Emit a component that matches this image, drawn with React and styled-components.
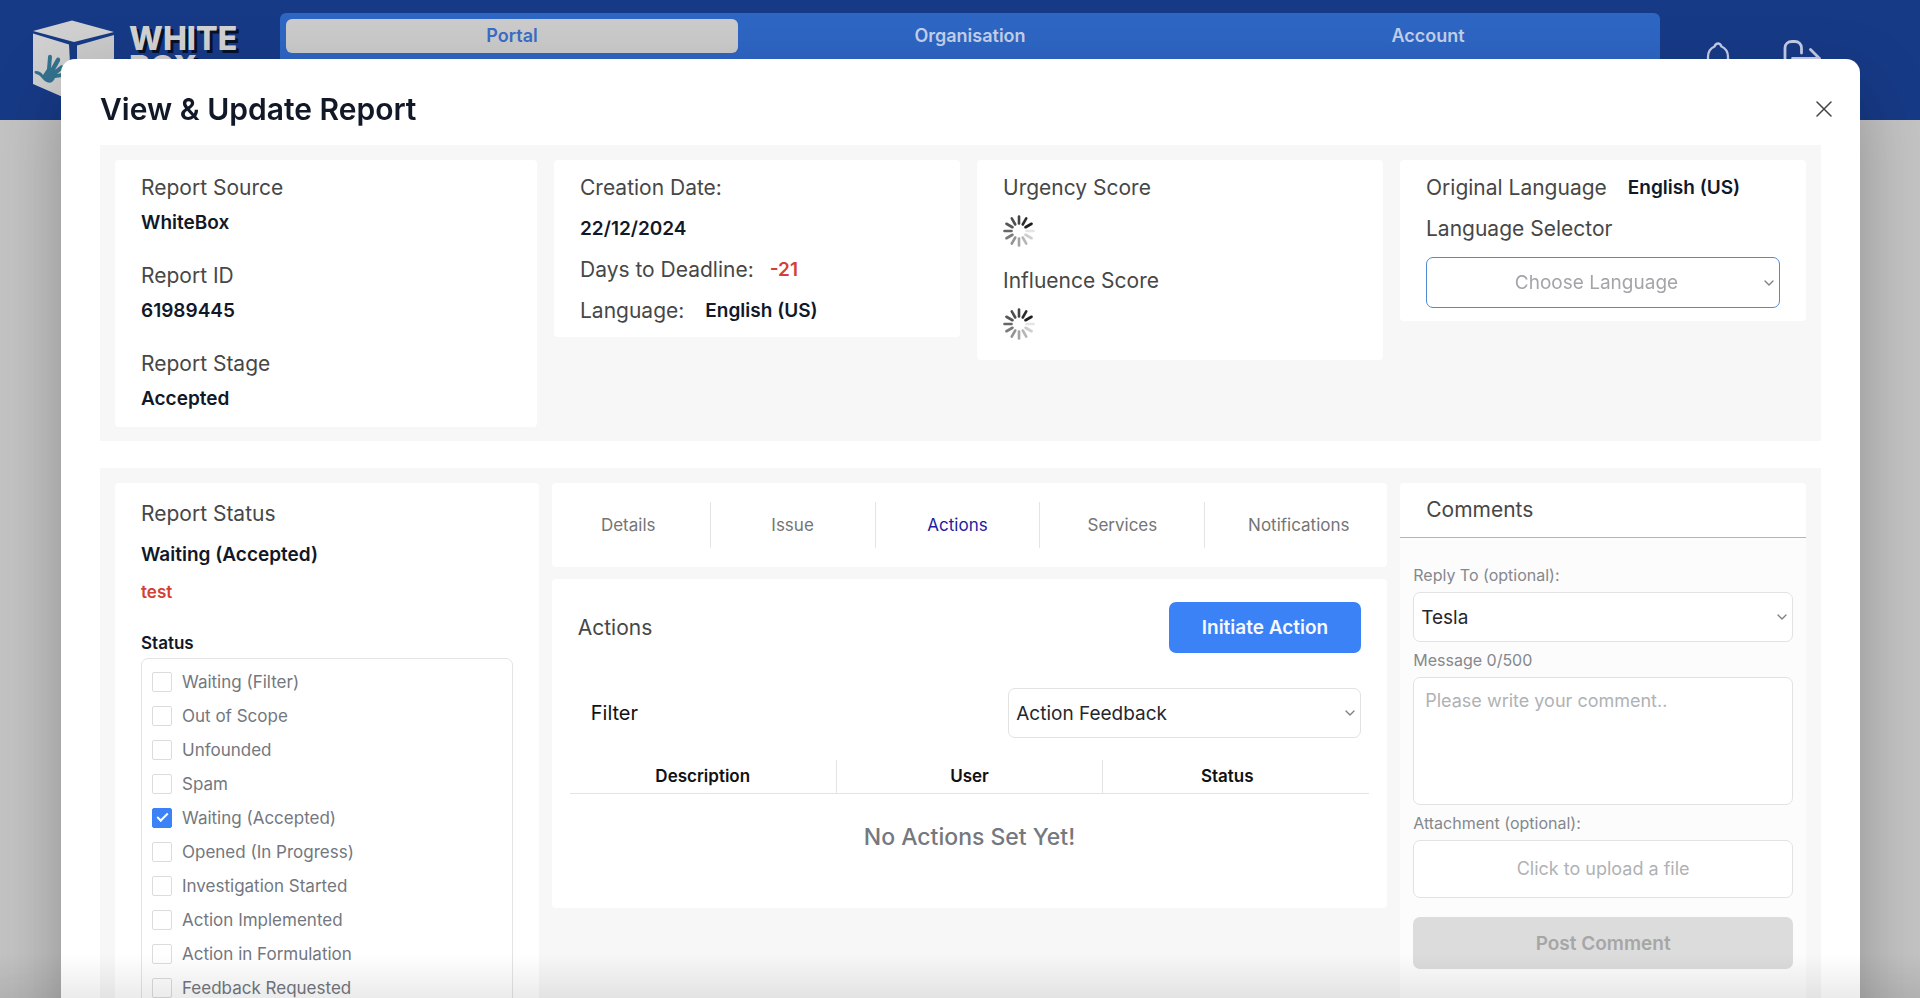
import React, { useState } from 'react';
import styled, { createGlobalStyle, css } from 'styled-components';
import { ChevronDown } from 'lucide-react';

const GlobalStyle = createGlobalStyle`
  *, *::before, *::after { box-sizing: border-box; }
  body {
    margin: 0;
    background: #c4c4c4;
    color: #111;
    font-family: Inter, "Liberation Sans", sans-serif;
    font-size: 17px;
    overflow: hidden;
  }
  button, input, select, textarea { font-family: inherit; }
  h1, h2, p { margin: 0; }
`;

/* ---------- site header behind the dialog ---------- */

const SiteHeader = styled.header`
  display: flex;
  align-items: center;
  height: 120px;
  background: #173a87;
`;

const Brand = styled.a`
  display: flex;
  flex: none;
  align-self: flex-start;
  gap: 13px;
  width: 280px;
  padding: 18px 0 0 32px;
  color: #d2d2d2;
  text-decoration: none;
`;

const BrandName = styled.span`
  padding-top: 6px;
  font-size: 32px;
  font-weight: 800;
  line-height: 29px;
  text-shadow: 3px 3px 0 #06112b;
`;

const Nav = styled.nav`
  display: grid;
  flex: 1;
  grid-template-columns: repeat(3, 1fr);
  align-self: flex-start;
  gap: 6px;
  margin-top: 13px;
  padding: 6px 6px 16px;
  border-radius: 6px;
  background: #2e66c4;
`;

const NavLink = styled.a`
  border-radius: 6px;
  background: ${(p) => (p.$active ? '#cbcbcb' : 'transparent')};
  color: ${(p) => (p.$active ? '#3b6dc7' : '#c3d0ea')};
  font-size: 18px;
  font-weight: 600;
  line-height: 34px;
  text-align: center;
  text-decoration: none;
`;

const HeaderTools = styled.div`
  display: flex;
  flex: none;
  align-items: center;
  gap: 53px;
  width: 260px;
  padding-left: 46px;
`;

const IconButton = styled.button`
  display: flex;
  padding: 0;
  border: 0;
  background: none;
  color: ${(p) => p.$color || '#c5cce6'};
  cursor: pointer;
`;

/* ---------- dialog ---------- */

const Overlay = styled.div`
  position: fixed;
  inset: 0;
  overflow: hidden;
  padding: 59px 60px 0 61px;

  &::after {
    content: '';
    position: absolute;
    right: 0;
    bottom: 0;
    left: 0;
    height: 44px;
    background: linear-gradient(rgba(0, 0, 0, 0), rgba(0, 0, 0, 0.08));
    pointer-events: none;
  }
`;

const Dialog = styled.section`
  border-radius: 14px 14px 0 0;
  background: #fff;
  box-shadow: 0 30px 70px rgba(0, 0, 0, 0.28);
`;

const DialogHeader = styled.div`
  display: flex;
  align-items: center;
  justify-content: space-between;
  height: 86px;
  padding: 14px 28px 0 39px;
`;

const DialogTitle = styled.h1`
  color: #111827;
  font-size: 30px;
  font-weight: 600;
  line-height: 36px;
`;

const DialogBody = styled.div`
  display: flex;
  flex-direction: column;
  gap: 27px;
  padding: 0 39px 40px;
`;

const Panel = styled.div`
  display: grid;
  grid-template-columns: ${(p) => p.$columns};
  align-items: ${(p) => (p.$stretch ? 'stretch' : 'start')};
  gap: ${(p) => p.$gap};
  padding: 15px 15px 14px;
  background: #f7f7f7;
`;

const Card = styled.div`
  min-width: 0;
  border-radius: 4px;
  background: #fff;
`;

const SourceCard = styled(Card)`
  padding: 1px 0 2px;
`;

const Block = styled.div`
  padding: 10px 26px 8px;
`;

const FieldCard = styled(Card)`
  display: flex;
  flex-direction: column;
  gap: 7px;
  padding: 11px 26px 9px;
`;

const ScoreCard = styled(Card)`
  display: flex;
  flex-direction: column;
  gap: 17px;
  padding: 11px 26px 20px;
`;

const LanguageCard = styled(Card)`
  display: grid;
  gap: 7px;
  padding: 11px 26px 13px;
`;

const Score = styled.div`
  display: flex;
  flex-direction: column;
  gap: 10px;
`;

const Line = styled.div`
  display: flex;
  gap: ${(p) => p.$gap || '16px'};
`;

const fieldLabel = css`
  color: #474747;
  font-size: 21px;
  font-weight: 400;
  line-height: 34px;
`;

const Label = styled.div`
  ${fieldLabel}
`;

const SelectLabel = styled.label`
  ${fieldLabel}
  padding-bottom: 4px;
`;

const Value = styled.div`
  color: ${(p) => (p.$alert ? '#d43f36' : '#111827')};
  font-size: 19px;
  font-weight: 600;
  line-height: ${(p) => (p.$tall ? '36px' : '34px')};
`;

const SelectBox = styled.div`
  position: relative;
  width: ${(p) => p.$width || '100%'};

  svg {
    position: absolute;
    top: 50%;
    right: 3px;
    margin-top: -8px;
    color: #808080;
    pointer-events: none;
  }
`;

const Select = styled.select`
  display: block;
  width: 100%;
  height: ${(p) => (p.$accent ? '51px' : '50px')};
  padding: 0 20px 0 7px;
  border: 1px solid ${(p) => (p.$accent ? '#5089d6' : '#e2e2e2')};
  border-radius: 7px;
  appearance: none;
  background: #fff;
  color: ${(p) => (p.$accent ? '#a3a5aa' : '#25272d')};
  font-size: 19px;
  text-align-last: ${(p) => (p.$accent ? 'center' : 'left')};
`;

/* ---------- report status ---------- */

const StatusCard = styled(Card)`
  display: flex;
  flex-direction: column;
  padding: 14px 26px 26px;
`;

const StatusSummary = styled.div`
  display: flex;
  flex-direction: column;
  gap: 6px;
`;

const StatusNote = styled.p`
  margin-top: 6px;
  color: #d43f36;
  font-weight: 600;
  line-height: 26px;
`;

const StatusSet = styled.fieldset`
  margin: 26px 0 0;
  padding: 0;
  border: 0;
`;

const StatusLegend = styled.legend`
  padding: 0 0 3px;
  color: #111827;
  font-size: 17px;
  font-weight: 600;
  line-height: 24px;
`;

const StatusList = styled.div`
  padding: 6px 10px;
  border: 1px solid #e4e4e4;
  border-radius: 7px;
`;

const StatusOption = styled.label`
  display: flex;
  align-items: center;
  gap: 10px;
  height: 34px;
  color: #737780;
`;

const Tick = styled.input`
  display: grid;
  flex: none;
  place-items: center;
  width: 20px;
  height: 20px;
  margin: 0;
  border: 1px solid #dcdcdc;
  border-radius: 2px;
  appearance: none;
  background: #fff;

  &:checked {
    border-color: #3b82f6;
    background: #3b82f6;
  }

  &:checked::after {
    content: '';
    width: 11px;
    height: 6px;
    margin-bottom: 4px;
    border: solid #fff;
    border-width: 0 0 2px 2px;
    transform: rotate(-45deg);
  }
`;

/* ---------- actions ---------- */

const Middle = styled.div`
  display: flex;
  flex-direction: column;
  gap: 12px;
  min-width: 0;
`;

const Tabs = styled(Card)`
  display: grid;
  grid-template-columns: 159fr 165fr 165fr 165fr 182fr;
  padding: 19px 0;
`;

const Tab = styled.button`
  height: 46px;
  padding: 0;
  border: 0;
  border-right: 1px solid #e4e4e4;
  background: none;
  color: ${(p) => (p.$active ? '#1d1d9e' : '#757575')};
  font-size: 17px;

  &:first-child {
    padding-right: 5px;
  }

  &:last-child {
    padding-left: 5px;
    border-right: 0;
  }
`;

const ActionsCard = styled(Card)`
  padding: 23px 0 27px;
`;

const Row = styled.div`
  display: flex;
  align-items: center;
  justify-content: space-between;
  margin-top: ${(p) => (p.$spaced ? '35px' : '0')};
  padding: 0 26px 0 ${(p) => (p.$spaced ? '39px' : '26px')};
`;

const CardTitle = styled.h2`
  ${fieldLabel}
`;

const FilterLabel = styled.label`
  color: #111;
  font-size: 20px;
`;

const PrimaryButton = styled.button`
  height: 51px;
  padding: 0 33px;
  border: 0;
  border-radius: 7px;
  background: #3b82f6;
  color: #f6f9ff;
  font-size: 19px;
  font-weight: 600;
`;

const TableWrap = styled.div`
  padding: 22px 18px 0;
`;

const Table = styled.table`
  width: 100%;
  border-collapse: collapse;
  table-layout: fixed;

  th {
    height: 33px;
    padding: 0;
    border-right: 1px solid #e4e4e4;
    border-bottom: 1px solid #e4e4e4;
    color: #111;
    font-size: 17px;
    font-weight: 600;
  }

  th:last-child {
    padding-right: 18px;
    border-right: 0;
  }

  td {
    height: 88px;
    padding: 0;
    color: #75787e;
    font-size: 23px;
    font-weight: 500;
    text-align: center;
  }
`;

/* ---------- comments ---------- */

const CommentsCard = styled(Card)`
  background: #fcfcfc;
`;

const CommentsHeader = styled.div`
  padding: 10px 26px;
  border-bottom: 1px solid #b5b5b5;
  border-radius: 4px 4px 0 0;
  background: #fff;
`;

const CommentForm = styled.form`
  display: flex;
  flex-direction: column;
  padding: 19px 13px;
`;

const FormLabel = styled.label`
  padding: 7px 0 6px;
  color: #85888e;
  font-size: 16px;
  line-height: 22px;
`;

const Message = styled.textarea`
  display: block;
  height: 128px;
  padding: 11px;
  border: 1px solid #e2e2e2;
  border-radius: 7px;
  background: #fff;
  font-size: 18px;
  line-height: 24px;
  resize: none;

  &::placeholder { color: #b0b2b5; opacity: 1; }
`;

const Upload = styled.label`
  position: relative;
  height: 58px;
  border: 1px solid #e2e2e2;
  border-radius: 7px;
  background: #fff;
  color: #b0b2b5;
  font-size: 18px;
  line-height: 56px;
  text-align: center;

  input {
    position: absolute;
    inset: 0;
    width: 100%;
    height: 100%;
    opacity: 0;
  }
`;

const PostButton = styled.button`
  height: 52px;
  margin-top: 19px;
  border: 0;
  border-radius: 7px;
  background: #dcdcdc;
  color: #a6a6a6;
  font-size: 19px;
  font-weight: 600;
`;

/* ---------- drawings ---------- */

function BoxLogo() {
  return (
    <svg width="84" height="88" viewBox="0 0 84 88" aria-hidden="true">
      <path d="M1 13 40 2.500 82 14 42 24Z" fill="#d0d0d0" />
      <path d="M1 15.500 37 26.500 40 83 1 66Z" fill="#d0d0d0" />
      <path d="M45 27.500 82 17V68L45 83Z" fill="#cacaca" />
      <path
        d="M4 53c3 0 5 1 7 4l4-6 1-12c0-3 4-3 4 0l-1 11 5-9c2-3 5-1 4 2l-5 9 5-4c2-2 5 1 3 3l-6 5 5-1c3 0 3 4 0 4l-7 1c-2 5-6 6-10 3-3-2-4-6-9-7-2-1-2-3 0-3Z"
        fill="#35738f"
      />
    </svg>
  );
}

function BellIcon() {
  return (
    <svg width="24" height="36" viewBox="0 0 24 36" fill="none" stroke="currentColor" strokeWidth="2.300" strokeLinecap="round" strokeLinejoin="round">
      <path d="M2 18v-3C2 9 5 6 8.500 4.500 9.500 2 10.500 1.500 12 1.500S14.500 2 15.500 4.500C19 6 22 9 22 15v12H2v-9M8 31c1 3 7 3 8 0" />
    </svg>
  );
}

function LogoutIcon() {
  return (
    <svg width="38" height="40" viewBox="0 0 38 40" fill="none" stroke="currentColor" strokeWidth="2.800" strokeLinecap="round" strokeLinejoin="round">
      <path d="M18.500 13V8c0-4-3-6.500-6.500-6.500H9C5 1.500 2 4 2 8v23c0 4 3 7 7 7h3c4 0 6.500-3 6.500-7v-5" />
      <path d="M9.500 18.500H36.500M27.500 9.500 36.500 18.500 27.500 27.500" />
    </svg>
  );
}

function CloseIcon() {
  return (
    <svg width="16" height="16" viewBox="0 0 16 16" fill="none" stroke="currentColor" strokeWidth="1.500" strokeLinecap="round">
      <path d="M1 1 15 15M15 1 1 15" />
    </svg>
  );
}

const tickOpacity = [0.95, 0.88, 0.78, 0.74, 0.7, 0.64, 0.55, 0.45, 0.38, 0.3, 0.2, 0.1];

function Spinner() {
  return (
    <svg width="32" height="32" viewBox="0 0 32 32" role="img" aria-label="Loading">
      {tickOpacity.map((opacity, i) => (
        <line
          key={opacity}
          x1="16" y1="1.500" x2="16" y2="8.500"
          stroke="#111" strokeWidth="2.600" strokeLinecap="round"
          opacity={opacity}
          transform={`rotate(${60 - i * 30} 16 16)`}
        />
      ))}
    </svg>
  );
}

function SelectField({ id, width, accent, options, ...rest }) {
  return (
    <SelectBox $width={width}>
      <Select id={id} $accent={accent} {...rest}>
        {options.map((o) => <option key={o}>{o}</option>)}
      </Select>
      <ChevronDown size={16} strokeWidth={2} />
    </SelectBox>
  );
}

const source = [
  ['Report Source', 'WhiteBox'],
  ['Report ID', '61989445'],
  ['Report Stage', 'Accepted'],
];

const statuses = [
  'Waiting (Filter)', 'Out of Scope', 'Unfounded', 'Spam', 'Waiting (Accepted)',
  'Opened (In Progress)', 'Investigation Started', 'Action Implemented',
  'Action in Formulation', 'Feedback Requested',
];

const tabs = ['Details', 'Issue', 'Actions', 'Services', 'Notifications'];

export default function App() {
  const [status, setStatus] = useState('Waiting (Accepted)');
  const [tab, setTab] = useState('Actions');

  return (
    <>
      <GlobalStyle />
      <SiteHeader>
        <Brand href="#home">
          <BoxLogo />
          <BrandName>WHITE<br />BOX</BrandName>
        </Brand>
        <Nav>
          <NavLink href="#portal" $active>Portal</NavLink>
          <NavLink href="#organisation">Organisation</NavLink>
          <NavLink href="#account">Account</NavLink>
        </Nav>
        <HeaderTools>
          <IconButton aria-label="Alerts"><BellIcon /></IconButton>
          <IconButton aria-label="Log out"><LogoutIcon /></IconButton>
        </HeaderTools>
      </SiteHeader>

      <Overlay>
        <Dialog role="dialog" aria-labelledby="dialog-title">
          <DialogHeader>
            <DialogTitle id="dialog-title">View &amp; Update Report</DialogTitle>
            <IconButton aria-label="Close" $color="#444"><CloseIcon /></IconButton>
          </DialogHeader>

          <DialogBody>
            <Panel $columns="422fr 406fr 406fr 406fr" $gap="17px">
              <SourceCard>
                {source.map(([label, value]) => (
                  <Block key={label}>
                    <Label>{label}</Label>
                    <Value $tall>{value}</Value>
                  </Block>
                ))}
              </SourceCard>

              <FieldCard>
                <Label>Creation Date:</Label>
                <Value>22/12/2024</Value>
                <Line><Label>Days to Deadline:</Label><Value $alert>-21</Value></Line>
                <Line $gap="21px"><Label>Language:</Label><Value>English (US)</Value></Line>
              </FieldCard>

              <ScoreCard>
                <Score><Label>Urgency Score</Label><Spinner /></Score>
                <Score><Label>Influence Score</Label><Spinner /></Score>
              </ScoreCard>

              <LanguageCard>
                <Line $gap="21px"><Label>Original Language</Label><Value>English (US)</Value></Line>
                <SelectLabel htmlFor="language">Language Selector</SelectLabel>
                <SelectField id="language" accent options={['Choose Language']} />
              </LanguageCard>
            </Panel>

            <Panel $columns="424fr 836fr 406fr" $gap="13px" $stretch>
              <StatusCard>
                <StatusSummary>
                  <Label>Report Status</Label>
                  <Value $tall>Waiting (Accepted)</Value>
                </StatusSummary>
                <StatusNote>test</StatusNote>
                <StatusSet>
                  <StatusLegend>Status</StatusLegend>
                  <StatusList>
                    {statuses.map((s) => (
                      <StatusOption key={s}>
                        <Tick type="checkbox" checked={s === status} onChange={() => setStatus(s)} />
                        {s}
                      </StatusOption>
                    ))}
                  </StatusList>
                </StatusSet>
              </StatusCard>

              <Middle>
                <Tabs role="tablist">
                  {tabs.map((t) => (
                    <Tab key={t} role="tab" aria-selected={t === tab} $active={t === tab} onClick={() => setTab(t)}>{t}</Tab>
                  ))}
                </Tabs>
                <ActionsCard>
                  <Row>
                    <CardTitle>Actions</CardTitle>
                    <PrimaryButton>Initiate Action</PrimaryButton>
                  </Row>
                  <Row $spaced>
                    <FilterLabel htmlFor="filter">Filter</FilterLabel>
                    <SelectField id="filter" width="353px" options={['Action Feedback']} />
                  </Row>
                  <TableWrap>
                    <Table>
                      <thead>
                        <tr><th>Description</th><th>User</th><th>Status</th></tr>
                      </thead>
                      <tbody>
                        <tr><td colSpan={3}>No Actions Set Yet!</td></tr>
                      </tbody>
                    </Table>
                  </TableWrap>
                </ActionsCard>
              </Middle>

              <CommentsCard>
                <CommentsHeader><CardTitle>Comments</CardTitle></CommentsHeader>
                <CommentForm>
                  <FormLabel htmlFor="reply">Reply To (optional):</FormLabel>
                  <SelectField id="reply" options={['Tesla']} />
                  <FormLabel htmlFor="message">Message 0/500</FormLabel>
                  <Message id="message" placeholder="Please write your comment.." />
                  <FormLabel htmlFor="attachment">Attachment (optional):</FormLabel>
                  <Upload>
                    Click to upload a file
                    <input id="attachment" type="file" />
                  </Upload>
                  <PostButton type="button" disabled>Post Comment</PostButton>
                </CommentForm>
              </CommentsCard>
            </Panel>
          </DialogBody>
        </Dialog>
      </Overlay>
    </>
  );
}
